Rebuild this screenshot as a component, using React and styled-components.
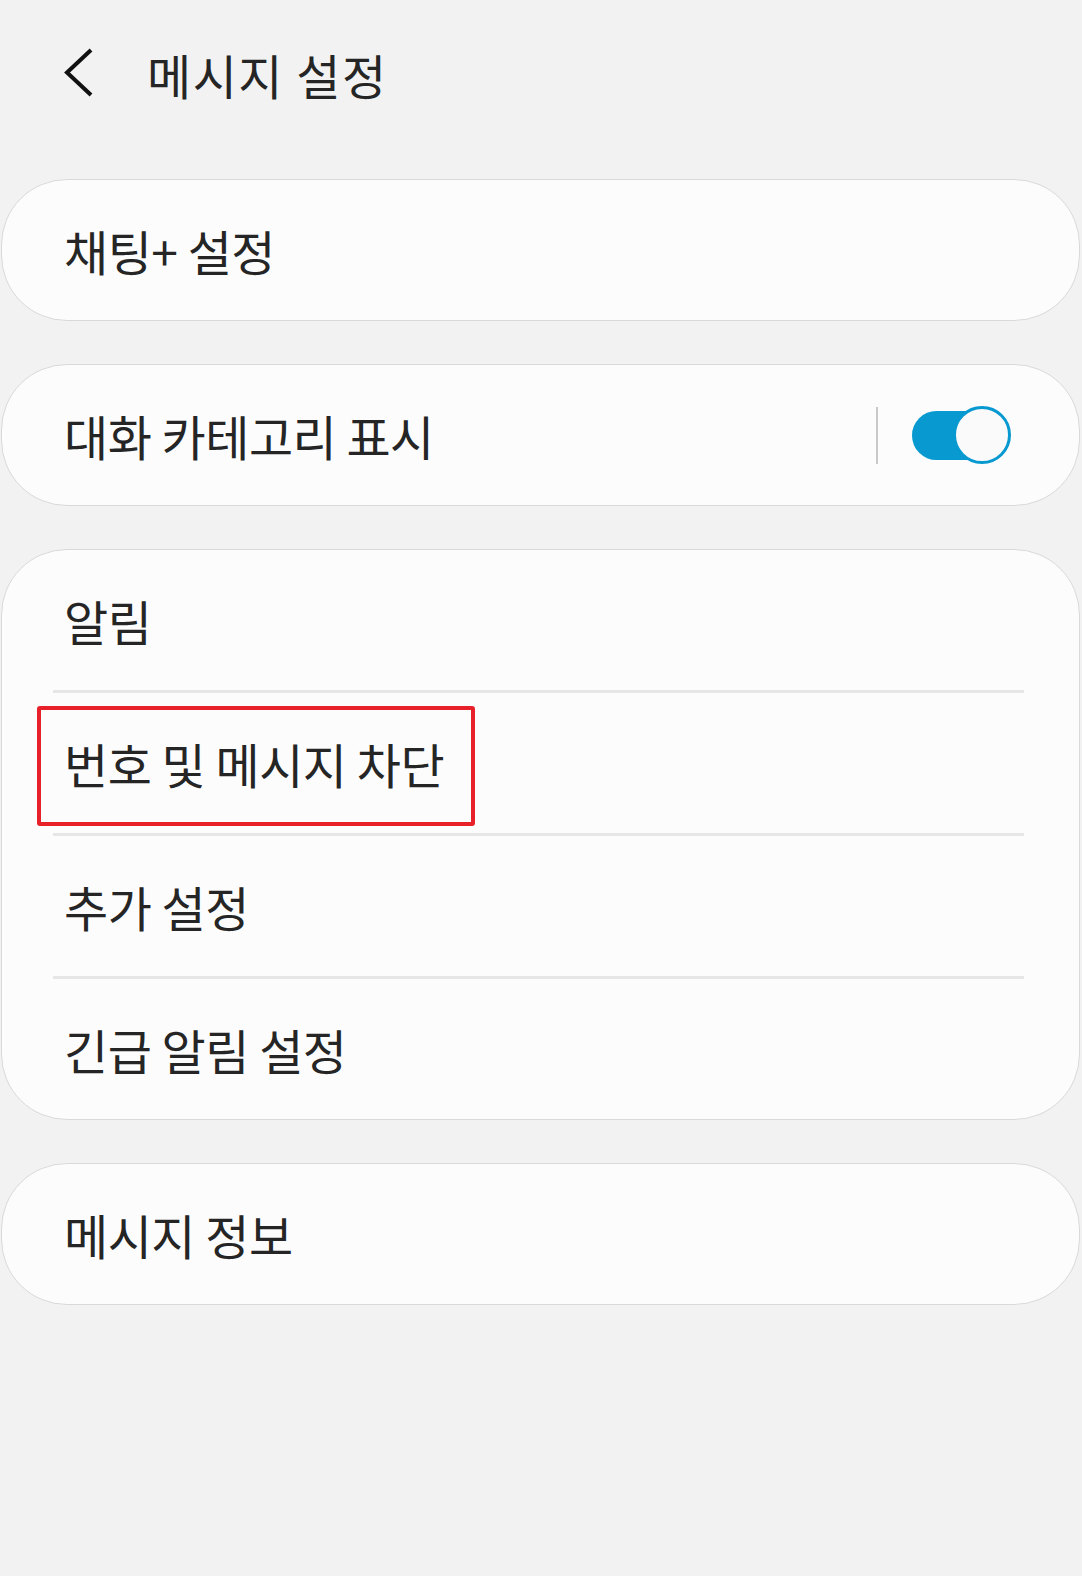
import React, { useState } from 'react';
import styled, { createGlobalStyle } from 'styled-components';

const GlobalStyle = createGlobalStyle`
  html, body {
    margin: 0;
    padding: 0;
    background: #f2f2f2;
    overflow: hidden;
  }
  body {
    font-family: "Noto Sans CJK KR", "Noto Sans", sans-serif;
    color: #252525;
  }
`;

const Page = styled.div`
  min-height: 100vh;
  background: #f2f2f2;
  padding: 0 2px 0 1px;
  box-sizing: border-box;
`;

const Header = styled.div`
  height: 179px;
  display: flex;
  align-items: flex-start;
  padding-top: 46px;
  padding-left: 58px;
  box-sizing: border-box;
`;

const BackButton = styled.button`
  width: 40px;
  height: 54px;
  border: none;
  background: none;
  padding: 0;
  display: flex;
  align-items: center;
  justify-content: center;
  cursor: pointer;
`;

const Title = styled.h1`
  margin: 0 0 0 48px;
  font-size: 48px;
  font-weight: 400;
  letter-spacing: 1.5px;
  line-height: 56px;
  color: #252525;
`;

const List = styled.div`
  display: flex;
  flex-direction: column;
  gap: 43px;
`;

const Card = styled.div`
  background: #fcfcfc;
  border: 1px solid #d9d9d9;
  border-radius: 66px;
  overflow: hidden;
`;

const Row = styled.div`
  position: relative;
  height: 140px;
  display: flex;
  align-items: center;
  padding: 0 70px 0 62px;
  box-sizing: border-box;
`;

const Label = styled.span`
  flex: 1;
  font-size: 48px;
  font-weight: 400;
  letter-spacing: -0.5px;
  color: #252525;
  line-height: 1;
`;

const Divider = styled.div`
  height: 3px;
  background: #e6e6e6;
  margin: 0 55px 0 51px;
`;

const VLine = styled.div`
  width: 2px;
  height: 57px;
  background: #c9c9c9;
  margin-right: 34px;
`;

const Switch = styled.button`
  position: relative;
  width: 97px;
  height: 58px;
  border: none;
  background: none;
  padding: 0;
  cursor: pointer;
`;

const Track = styled.span`
  position: absolute;
  left: 0;
  top: 5px;
  width: 80px;
  height: 49px;
  border-radius: 25px;
  background: ${p => (p.$on ? '#0799cf' : '#b0b0b0')};
`;

const Knob = styled.span`
  position: absolute;
  top: 0;
  left: ${p => (p.$on ? '41px' : '0')};
  width: 52px;
  height: 52px;
  border-radius: 50%;
  background: #fafafa;
  border: 3px solid ${p => (p.$on ? '#0799cf' : '#b0b0b0')};
`;

const Highlight = styled.div`
  position: absolute;
  left: 35px;
  top: 13px;
  width: 430px;
  height: 112px;
  border: 4px solid #e8202a;
  border-radius: 3px;
  pointer-events: none;
`;

const Chevron = () => (
  <svg width="34" height="52" viewBox="0 0 34 52">
    <polyline points="29,3 5,25.5 29,48" fill="none" stroke="#111" strokeWidth="4" />
  </svg>
);

export default function App() {
  const [showCategory, setShowCategory] = useState(true);

  return (
    <Page>
      <GlobalStyle />
      <Header>
        <BackButton aria-label="뒤로">
          <Chevron />
        </BackButton>
        <Title>메시지 설정</Title>
      </Header>
      <List>
        <Card>
          <Row>
            <Label>채팅+ 설정</Label>
          </Row>
        </Card>
        <Card>
          <Row>
            <Label>대화 카테고리 표시</Label>
            <VLine />
            <Switch onClick={() => setShowCategory(!showCategory)}>
              <Track $on={showCategory} />
              <Knob $on={showCategory} />
            </Switch>
          </Row>
        </Card>
        <Card>
          <Row>
            <Label>알림</Label>
          </Row>
          <Divider />
          <Row>
            <Label>번호 및 메시지 차단</Label>
            <Highlight />
          </Row>
          <Divider />
          <Row>
            <Label>추가 설정</Label>
          </Row>
          <Divider />
          <Row>
            <Label>긴급 알림 설정</Label>
          </Row>
        </Card>
        <Card>
          <Row>
            <Label>메시지 정보</Label>
          </Row>
        </Card>
      </List>
    </Page>
  );
}
